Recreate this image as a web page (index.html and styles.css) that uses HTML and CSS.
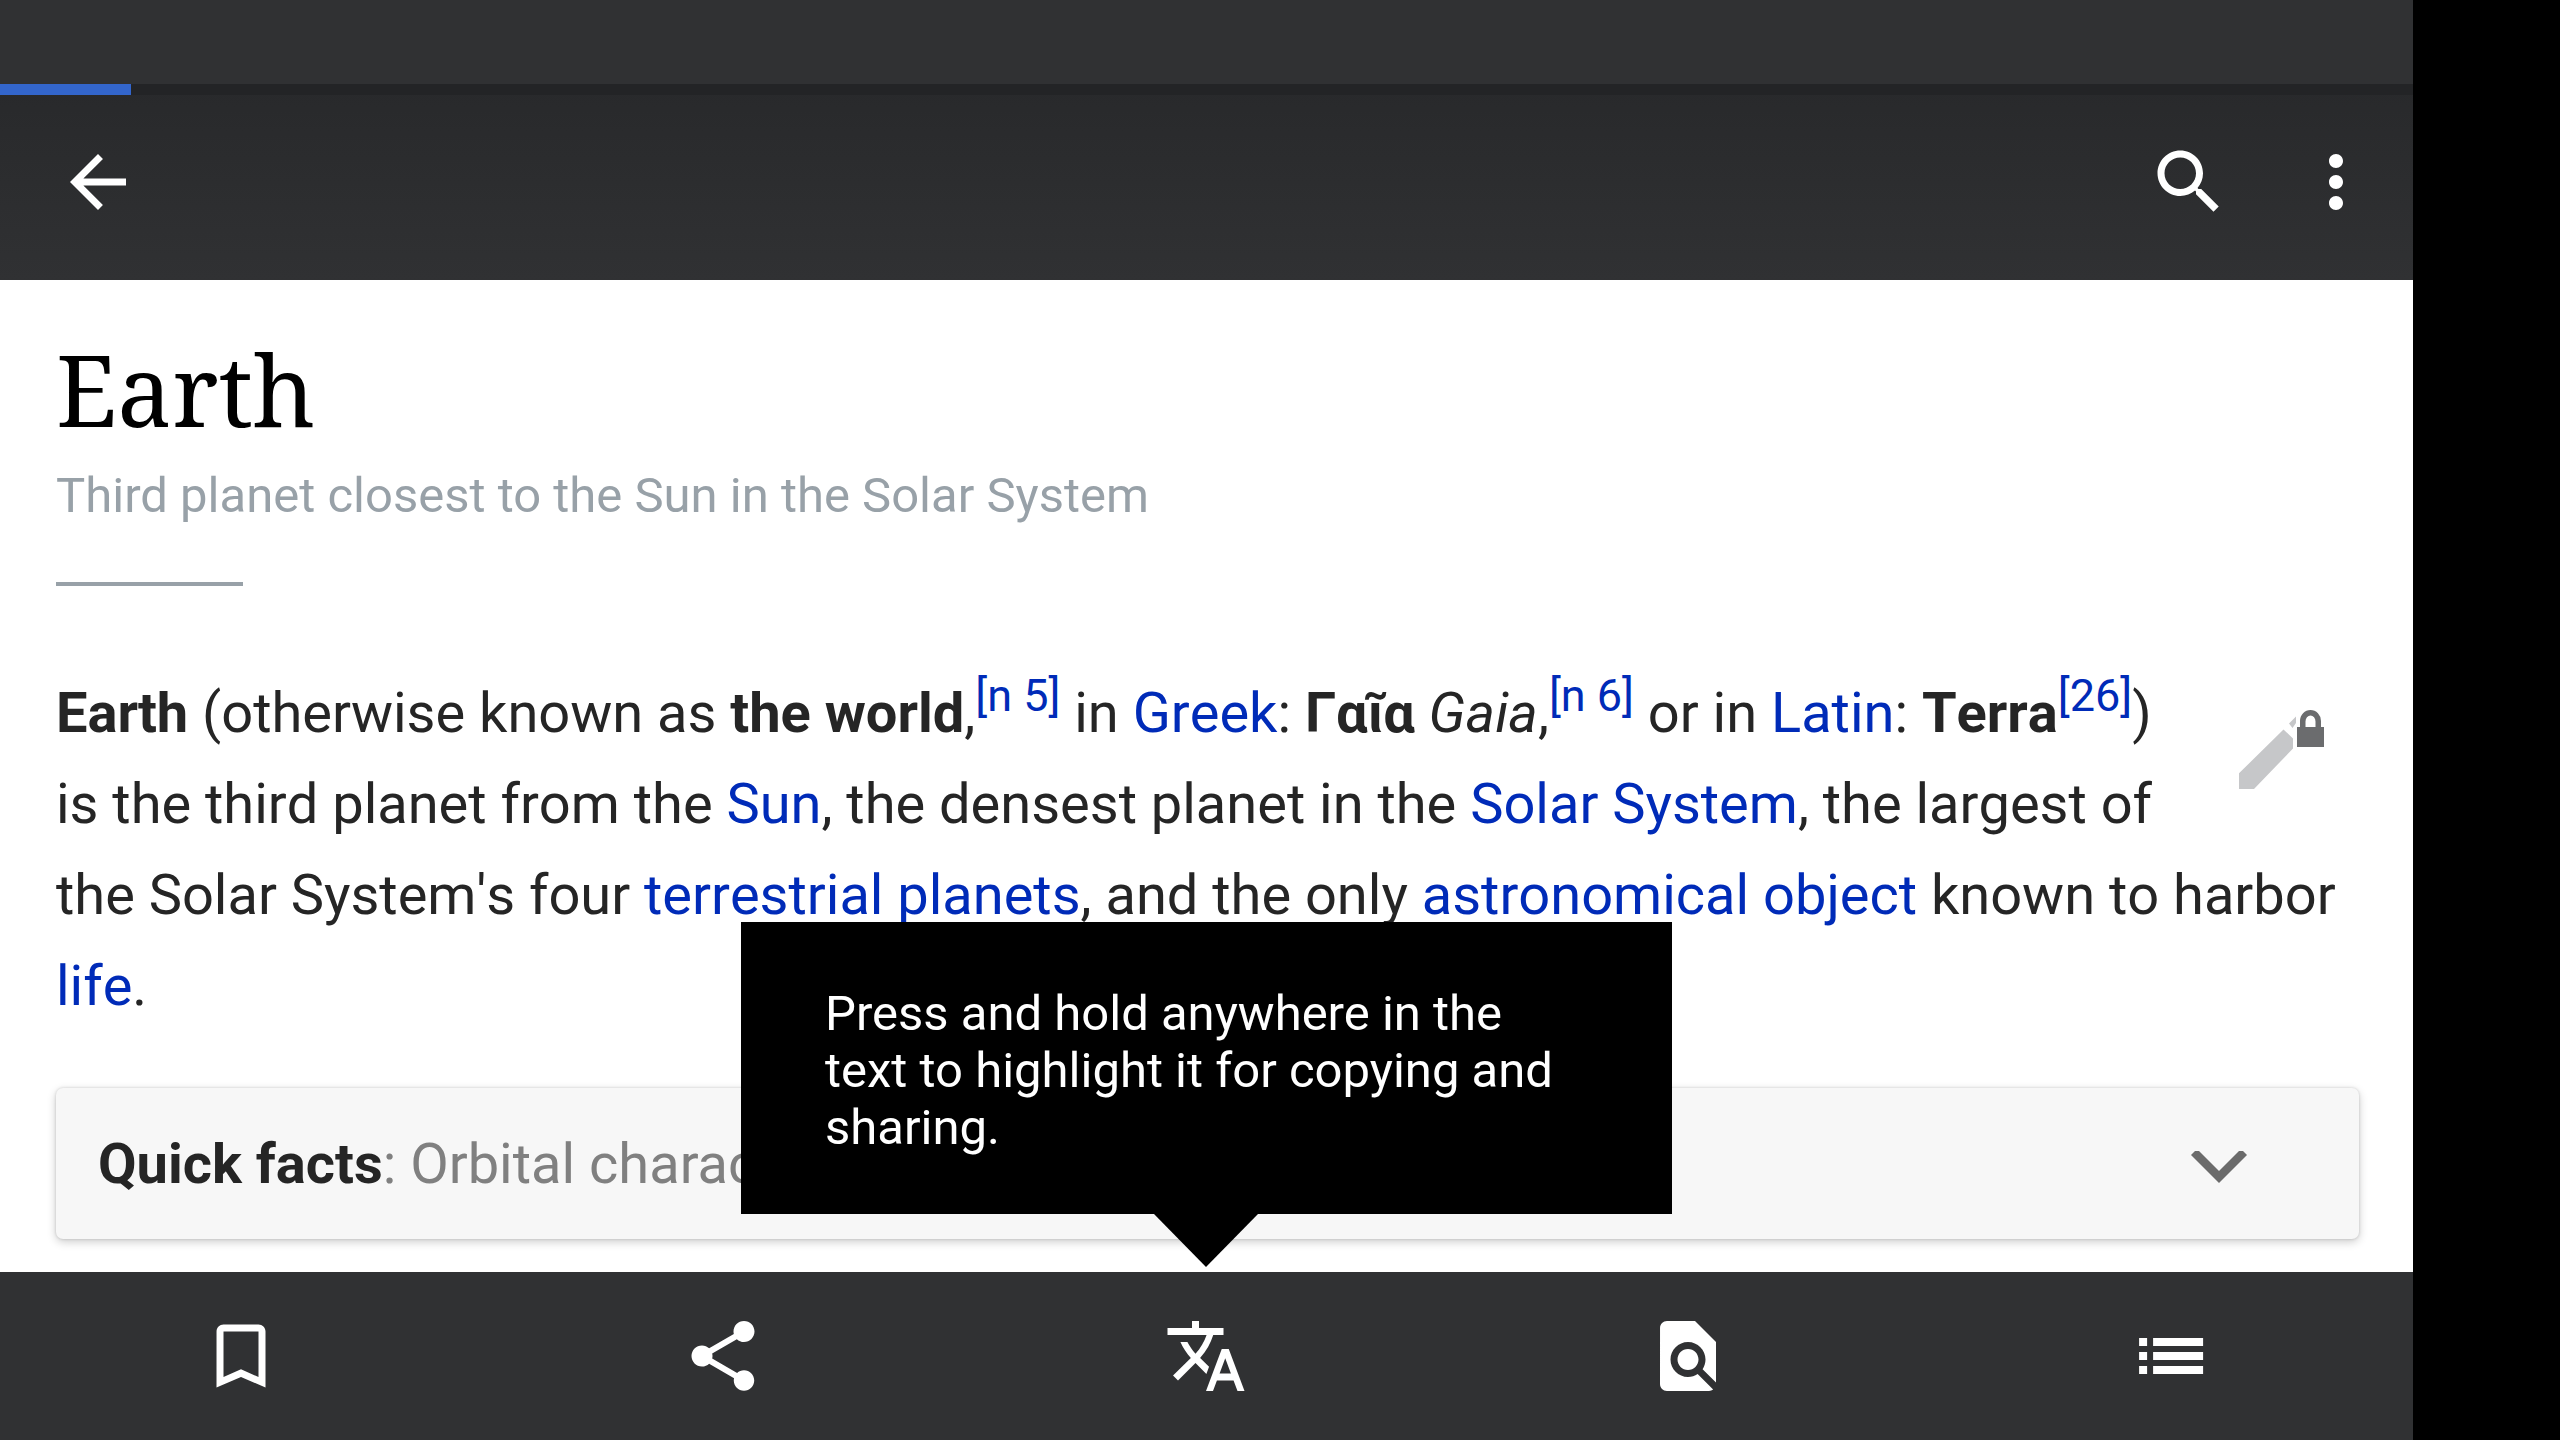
FILE: index.html
```html
<!DOCTYPE html>
<html lang="en">
<head>
<meta charset="utf-8">
<title>Earth</title>
<link rel="stylesheet" href="styles.css">
</head>
<body>
<div class="screen">
  <div class="status-bar"></div>
  <header class="toolbar">
    <div class="progress"><div class="progress-fill"></div></div>
    <svg class="icon" viewBox="0 0 24 24"><path d="M20 11H7.83l5.59-5.59L12 4l-8 8 8 8 1.41-1.41L7.83 13H20v-2z"/></svg>
    <div class="actions">
      <svg class="icon" viewBox="0 0 24 24"><path d="M15.5 14h-.79l-.28-.27C15.41 12.59 16 11.11 16 9.5 16 5.91 13.09 3 9.5 3S3 5.91 3 9.5 5.91 16 9.5 16c1.61 0 3.09-.59 4.23-1.57l.27.28v.79l5 4.99L20.49 19l-4.99-5zm-6 0C7.01 14 5 11.99 5 9.5S7.01 5 9.5 5 14 7.01 14 9.5 11.99 14 9.5 14z"/></svg>
      <svg class="icon" viewBox="0 0 24 24"><path d="M12 8c1.1 0 2-.9 2-2s-.9-2-2-2-2 .9-2 2 .9 2 2 2zm0 2c-1.1 0-2 .9-2 2s.9 2 2 2 2-.9 2-2-.9-2-2-2zm0 6c-1.1 0-2 .9-2 2s.9 2 2 2 2-.9 2-2-.9-2-2-2z"/></svg>
    </div>
  </header>
  <main class="article">
    <h1 class="title">Earth</h1>
    <p class="subtitle">Third planet closest to the Sun in the Solar System</p>
    <div class="divider"></div>
    <div class="lead">
      <svg class="edit" viewBox="0 0 88 84"><path fill="#c6c7c9" d="M0 63.300L44.500 19.500L54 28.500V38.500L15 79H0zM50 13.500L57 6.500V13L53.500 18z"/><path fill="#6b6c6e" d="M58 17h3V11a10.500 11 0 0 1 21 0v6h3v20H58zM66.500 17h10v-5.500a5 6 0 0 0-10 0z"/></svg>
      <p class="text"><b>Earth</b> (otherwise known as <b>the world</b>,<a class="ref">[n 5]</a> in <a>Greek</a>: <b>Γαῖα</b> <i>Gaia</i>,<a class="ref">[n 6]</a> or in <a>Latin</a>: <b>Terra</b><a class="ref">[26]</a>)<br>is the third planet from the <a>Sun</a>, the densest planet in the <a>Solar System</a>, the largest of<br>the Solar System's four <a>terrestrial planets</a>, and the only <a>astronomical object</a> known to harbor<br><a>life</a>.</p>
    </div>
    <div class="facts">
      <p class="facts-text"><b>Quick facts</b>: Orbital charac…</p>
      <svg class="chevron" viewBox="0 0 56 32"><path d="M0 4L4 0H8L28 20L48 0H52L56 4L28 32z" fill="#6b6b6b"/></svg>
    </div>
  </main>
  <nav class="tabs">
    <div class="tab"><svg class="icon" viewBox="0 0 24 24"><path d="M17 3H7c-1.100 0-1.990.9-1.990 2L5 21l7-3 7 3V5c0-1.100-.9-2-2-2zm0 15l-5-2.180L7 18V5h10v13z"/></svg></div>
    <div class="tab"><svg class="icon" viewBox="0 0 24 24"><path d="M18 16.080c-.76 0-1.440.3-1.960.77L8.910 12.700c.05-.23.09-.46.09-.7s-.04-.47-.09-.7l7.050-4.110c.54.5 1.250.81 2.040.81 1.660 0 3-1.340 3-3s-1.340-3-3-3-3 1.340-3 3c0 .24.04.47.09.7L8.040 9.810C7.500 9.310 6.790 9 6 9c-1.660 0-3 1.340-3 3s1.340 3 3 3c.79 0 1.500-.31 2.040-.81l7.120 4.160c-.05.21-.08.43-.08.65 0 1.610 1.310 2.920 2.920 2.920s2.920-1.310 2.920-2.920-1.310-2.920-2.920-2.920z"/></svg></div>
    <div class="tab"><svg class="icon" viewBox="0 0 24 24"><path d="M12.870 15.070l-2.540-2.510.03-.03c1.740-1.940 2.980-4.170 3.710-6.530H17V4h-7V2H8v2H1v1.990h11.170C11.500 7.920 10.440 9.750 9 11.350 8.070 10.320 7.300 9.190 6.690 8h-2c.73 1.630 1.730 3.170 2.980 4.560l-5.090 5.020L4 19l5-5 3.110 3.110.76-2.040zM18.500 10h-2L12 22h2l1.120-3h4.750L21 22h2l-4.500-12zm-2.620 7l1.620-4.330L19.120 17h-3.240z"/></svg></div>
    <div class="tab"><svg class="icon" viewBox="0 0 24 24"><path d="M20 19.590V8l-6-6H6c-1.100 0-1.990.9-1.990 2L4 20c0 1.100.89 2 1.990 2H18c.45 0 .85-.15 1.190-.4l-4.430-4.430c-.8.52-1.740.83-2.760.83-2.760 0-5-2.240-5-5s2.240-5 5-5 5 2.240 5 5c0 1.020-.31 1.960-.83 2.750L20 19.590zM9 13c0 1.660 1.340 3 3 3s3-1.340 3-3-1.340-3-3-3-3 1.340-3 3z"/></svg></div>
    <div class="tab"><svg class="icon" viewBox="0 0 84 84"><path d="M11.100 24h8v8h-8zM25.100 24h50v8h-50zM11.100 38h8v8h-8zM25.100 38h50v8h-50zM11.100 52h8v8h-8zM25.100 52h50v8h-50z"/></svg></div>
  </nav>
  <div class="tooltip">Press and hold anywhere in the<br>text to highlight it for copying and<br>sharing.</div>
</div>
</body>
</html>
```
FILE: styles.css
```css
* { box-sizing: border-box; }
body { margin: 0; background: #000; font-family: Roboto, sans-serif; }
h1, p { margin: 0; }
.screen {
  position: relative;
  width: 2413px;
  height: 1440px;
  display: flex;
  flex-direction: column;
  background: #fff;
  overflow: hidden;
}
.status-bar { height: 84px; background: #303133; }
.toolbar {
  position: relative;
  height: 196px;
  padding: 0 35px 0 56px;
  display: flex;
  align-items: center;
  justify-content: space-between;
  background: linear-gradient(#28292b, #303133);
}
.actions { display: flex; gap: 63px; }
.progress { position: absolute; top: 0; left: 0; right: 0; height: 11px; background: #232426; }
.progress-fill { width: 131px; height: 11px; background: #3366cc; }
.icon { display: block; width: 84px; height: 84px; fill: #fff; }
.article { flex: 1; min-height: 0; padding: 42px 54px 0 56px; }
.title {
  font: 400 98px/134px "Noto Serif", "Droid Serif", "DejaVu Serif Condensed", "DejaVu Serif", serif;
  color: #000;
}
.subtitle { margin-top: 11px; font-size: 49px; line-height: 58px; color: #98a1a8; }
.divider { margin-top: 57px; width: 187px; height: 4px; background: #98a1a8; }
.lead { margin-top: 82px; }
.edit { float: right; width: 88px; height: 84px; margin: 42px 32px 0 0; }
.text {
  font-size: 56px;
  line-height: 91px;
  letter-spacing: -.015px;
  color: #252525;
  white-space: nowrap;
  font-kerning: none;
}
.text a { color: #002bb8; }
.text .ref { font-size: 45px; line-height: 1; position: relative; top: -21px; }
.facts {
  margin-top: 56px;
  height: 151px;
  padding: 0 112px 0 42px;
  display: flex;
  align-items: center;
  justify-content: space-between;
  border-radius: 7px;
  background: #f7f7f7;
  box-shadow: 0 3px 10px rgba(0, 0, 0, .2), 0 0 3px rgba(0, 0, 0, .16);
}
.facts-text { padding-top: 2px; font-size: 56px; line-height: 91px; color: #808080; }
.facts-text b { color: #252525; }
.chevron { width: 56px; height: 32px; margin-top: 7px; }
.tabs { height: 168px; padding-right: 2px; display: flex; background: #303133; }
.tab { flex: 1; display: flex; align-items: center; justify-content: center; }
.tooltip {
  position: absolute;
  left: 741px;
  top: 922px;
  width: 931px;
  height: 292px;
  padding: 63px 84px;
  background: #000;
  color: #fff;
  font-size: 49px;
  line-height: 57px;
  white-space: nowrap;
}
.tooltip::after {
  content: "";
  position: absolute;
  top: 100%;
  left: 413px;
  border: solid transparent;
  border-width: 53px 52.5px 0;
  border-top-color: #000;
}
```
